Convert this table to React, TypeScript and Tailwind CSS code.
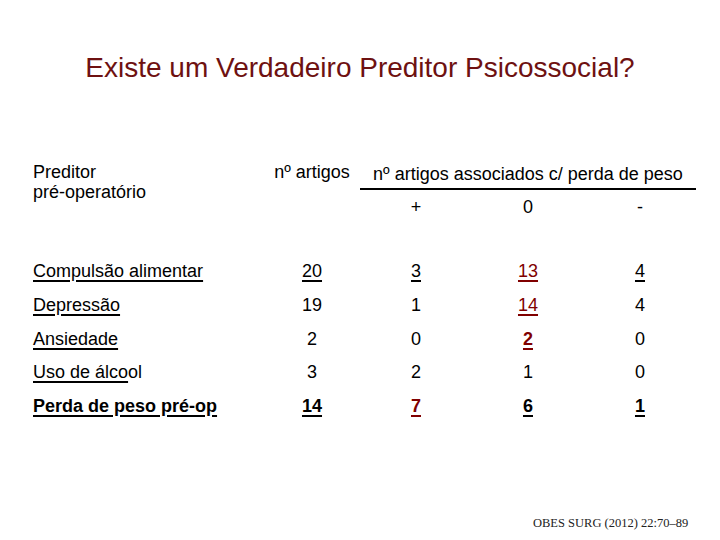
import React from "react";

const RED = "text-[#800000]";

type Cell = { t: string; u?: boolean; b?: boolean; r?: boolean; partial?: [string, string] };

const rows: { label: Cell; cells: Cell[] }[] = [
  {
    label: { t: "Compulsão alimentar", u: true },
    cells: [{ t: "20", u: true }, { t: "3", u: true }, { t: "13", u: true, r: true }, { t: "4", u: true }],
  },
  {
    label: { t: "Depressão", u: true },
    cells: [{ t: "19" }, { t: "1" }, { t: "14", u: true, r: true }, { t: "4" }],
  },
  {
    label: { t: "Ansiedade", u: true },
    cells: [{ t: "2" }, { t: "0" }, { t: "2", u: true, r: true, b: true }, { t: "0" }],
  },
  {
    label: { t: "Uso de álcool", partial: ["Uso de álco", "ol"] },
    cells: [{ t: "3" }, { t: "2" }, { t: "1" }, { t: "0" }],
  },
  {
    label: { t: "Perda de peso pré-op", u: true, b: true },
    cells: [
      { t: "14", u: true, b: true },
      { t: "7", u: true, b: true, r: true },
      { t: "6", u: true, b: true },
      { t: "1", u: true, b: true },
    ],
  },
];

function Txt({ c }: { c: Cell }) {
  if (c.partial) {
    return (
      <span>
        <span className="underline decoration-[1.5px] underline-offset-[3px]">{c.partial[0]}</span>
        {c.partial[1]}
      </span>
    );
  }
  const cls = [
    c.u ? (c.b ? "underline decoration-2 underline-offset-[3px]" : "underline decoration-[1.5px] underline-offset-[3px]") : "",
    c.b ? "font-bold" : "",
    c.r ? RED : "",
  ].join(" ");
  return <span className={cls}>{c.t}</span>;
}

export default function App() {
  return (
    <div
      className="w-[720px] h-[540px] bg-white text-black relative overflow-hidden"
      style={{ fontFamily: '"Liberation Sans", Arial, sans-serif' }}
    >
      <div className="pt-[50px] h-[86px] text-center text-[28px] leading-[36px] text-[#6e1111]">
        Existe um Verdadeiro Preditor Psicossocial?
      </div>

      <div className="mt-[76px] pl-[33px] text-[18px]">
        {/* header */}
        <div className="flex">
          <div className="w-[237px] leading-[20px]">
            <div>Preditor</div>
            <div>pré-operatório</div>
          </div>
          <div className="w-[84px] text-center leading-[20px]">nº artigos</div>
          <div className="w-[6px]" />
          <div className="w-[336px]">
            <div className="text-center leading-[20px] pt-[2px] pb-[4px] border-b-2 border-black">
              nº artigos associados c/ perda de peso
            </div>
            <div className="flex leading-[20px] pt-[7px]">
              <div className="w-[112px] text-center">+</div>
              <div className="w-[112px] text-center">0</div>
              <div className="w-[112px] text-center">-</div>
            </div>
          </div>
        </div>

        {/* rows */}
        <div className="mt-[44px] flex flex-col gap-[13.75px]">
          {rows.map((row, i) => (
            <div key={i} className="flex leading-[20px] h-[20px]">
              <div className="w-[237px]">
                <Txt c={row.label} />
              </div>
              <div className="w-[84px] text-center">
                <Txt c={row.cells[0]} />
              </div>
              <div className="w-[6px]" />
              {row.cells.slice(1).map((c, j) => (
                <div key={j} className="w-[112px] text-center">
                  <Txt c={c} />
                </div>
              ))}
            </div>
          ))}
        </div>
      </div>

      <div
        className="absolute left-[533px] top-[515px] text-[12.5px] leading-[16px] text-[#222]"
        style={{ fontFamily: '"Liberation Serif", "Times New Roman", serif' }}
      >
        OBES SURG (2012) 22:70–89
      </div>
    </div>
  );
}
